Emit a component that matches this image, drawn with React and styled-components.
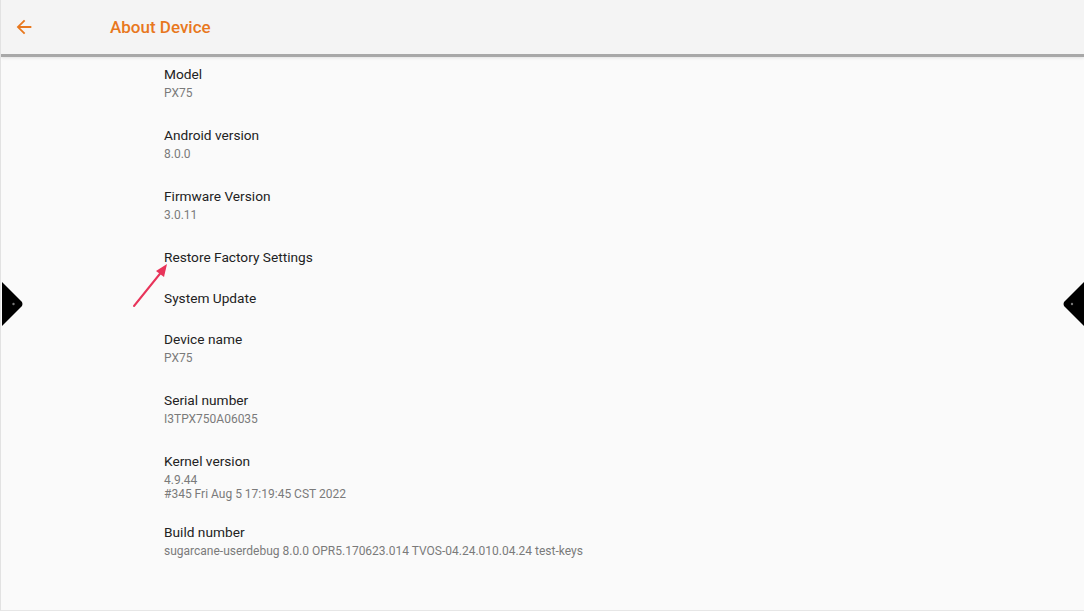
import React from 'react'
import styled, { createGlobalStyle } from 'styled-components'

const Global = createGlobalStyle`
  html, body {
    margin: 0;
    padding: 0;
    background: #fafafa;
  }
  body {
    font-family: Roboto, "Noto Sans", sans-serif;
  }
`

const Page = styled.div`
  position: relative;
  height: 611px;
  box-sizing: border-box;
  border-left: 1px solid #e2e2e2;
  border-bottom: 1px solid #e6e6e6;
  background: #fafafa;
  overflow: hidden;
`

const Header = styled.div`
  position: relative;
  z-index: 1;
  height: 54px;
  display: flex;
  align-items: center;
  padding-left: 12px;
  background: #f4f4f4;
  box-shadow: 0 3px 0 #a8a8a8, 0 4px 3px rgba(0, 0, 0, 0.1);
`

const BackButton = styled.div`
  width: 22px;
  height: 22px;
  display: flex;
  color: #e8781e;
`

const Title = styled.h1`
  margin: 0 0 0 75px;
  font-size: 17px;
  font-weight: 500;
  color: #e8781e;
`

const List = styled.div`
  display: flex;
  flex-direction: column;
  padding-left: 163px;
`

const Item = styled.div`
  padding: 10px 0 11px;
`

const Label = styled.div`
  font-size: 13.7px;
  line-height: 20px;
  color: #222;
`

const Value = styled.div`
  margin-top: 2px;
  min-height: 18px;
  font-size: 12px;
  line-height: 14px;
  color: #7a7a7a;
  white-space: pre-line;
`

const SideTab = styled.div`
  position: absolute;
  top: 282px;
  ${p => (p.side === 'left' ? 'left: 0;' : 'right: 0;')}
  width: 22px;
  height: 44px;
`

const Annotation = styled.svg`
  position: absolute;
  left: 128px;
  top: 258px;
`

const items = [
  { label: 'Model', value: 'PX75' },
  { label: 'Android version', value: '8.0.0' },
  { label: 'Firmware Version', value: '3.0.11' },
  { label: 'Restore Factory Settings' },
  { label: 'System Update' },
  { label: 'Device name', value: 'PX75' },
  { label: 'Serial number', value: 'I3TPX750A06035' },
  { label: 'Kernel version', value: '4.9.44\n#345 Fri Aug 5 17:19:45 CST 2022' },
  { label: 'Build number', value: 'sugarcane-userdebug 8.0.0 OPR5.170623.014 TVOS-04.24.010.04.24 test-keys' },
]

const Tab = ({ side }) => (
  <SideTab side={side}>
    <svg width="22" height="44" viewBox="0 0 22 44">
      {side === 'left' ? (
        <>
          <path d="M1 0 L21 20 Q22 22 21 24 L1 44 Z" fill="#000" />
          <circle cx="12.5" cy="22" r="1.2" fill="#777" />
        </>
      ) : (
        <>
          <path d="M22 0 L2 20 Q1 22 2 24 L22 44 Z" fill="#000" />
          <circle cx="10" cy="22" r="1.2" fill="#777" />
        </>
      )}
    </svg>
  </SideTab>
)

export default function App() {
  return (
    <Page>
      <Global />
      <Header>
        <BackButton>
          <svg width="22" height="22" viewBox="0 0 24 24" fill="currentColor">
            <path d="M20 11H7.83l5.59-5.59L12 4l-8 8 8 8 1.41-1.41L7.83 13H20v-2z" />
          </svg>
        </BackButton>
        <Title>About Device</Title>
      </Header>
      <List>
        {items.map(it => (
          <Item key={it.label}>
            <Label>{it.label}</Label>
            {it.value && <Value>{it.value}</Value>}
          </Item>
        ))}
      </List>
      <Tab side="left" />
      <Tab side="right" />
      <Annotation width="44" height="52" viewBox="0 0 44 52">
        <line x1="5" y1="48" x2="34" y2="12" stroke="#e8345a" strokeWidth="2" strokeLinecap="round" />
        <path d="M38 6 L27 13 L35 19 Z" fill="#e8345a" />
      </Annotation>
    </Page>
  )
}
